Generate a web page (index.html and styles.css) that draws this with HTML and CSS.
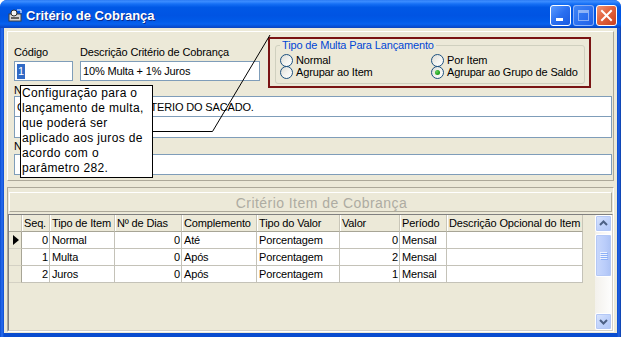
FILE: index.html
```html
<!DOCTYPE html>
<html lang="pt-BR">
<head>
<meta charset="utf-8">
<title>Critério de Cobrança</title>
<link rel="stylesheet" href="styles.css">
</head>
<body>
<div class="window">
  <header class="titlebar">
    <svg class="app-icon" viewBox="0 0 14 13" width="14" height="13">
      <rect x="1" y="5" width="12" height="7" fill="#d8d8d8" stroke="#404040" stroke-width="1"/>
      <circle cx="6" cy="4" r="3" fill="#f4f4f4" stroke="#303030" stroke-width="1"/>
      <rect x="3" y="8" width="8" height="2" fill="#606060"/>
      <path d="M9 1 L13 1 L13 4" stroke="#fff" stroke-width="1" fill="none"/>
    </svg>
    <span class="title">Critério de Cobrança</span>
    <div class="controls">
      <span class="wbtn wbtn-min"><span class="glyph-min"></span></span>
      <span class="wbtn wbtn-max"><span class="glyph-max"></span></span>
      <span class="wbtn wbtn-close"><svg viewBox="0 0 19 19" width="19" height="19"><path d="M5 5 L14 14 M14 5 L5 14" stroke="#fff" stroke-width="2" stroke-linecap="square"/></svg></span>
    </div>
  </header>
  <main class="client">
    <section class="top-panel">
      <div class="row-head">
        <div class="field field-code">
          <span class="lbl">Código</span>
          <div class="tbox"><span class="sel">1</span></div>
        </div>
        <div class="field field-desc">
          <span class="lbl">Descrição Critério de Cobrança</span>
          <div class="tbox">10% Multa + 1% Juros</div>
        </div>
        <div class="red-frame">
          <fieldset class="group">
            <legend>Tipo de Multa Para Lançamento</legend>
            <div class="radios">
              <span class="radio"><span class="rb"></span>Normal</span>
              <span class="radio"><span class="rb"></span>Por Item</span>
              <span class="radio"><span class="rb"></span>Agrupar ao Item</span>
              <span class="radio"><span class="rb rb-on"></span>Agrupar ao Grupo de Saldo</span>
            </div>
          </fieldset>
        </div>
      </div>
      <span class="lbl lbl-wide">Nota de Cobrança</span>
      <div class="memo">
        <div class="tbox tbox-wide">COBRAR CONFORME CRITERIO DO SACADO.</div>
        <div class="tbox tbox-wide tbox-cont"></div>
      </div>
      <span class="lbl lbl-wide2">Nota Adicional</span>
      <div class="tbox tbox-wide"></div>
    </section>

    <section class="grid-panel">
      <div class="caption">Critério Item de Cobrança</div>
      <div class="dbgrid">
        <div class="cells">
          <div class="c h"></div>
          <div class="c h">Seq.</div>
          <div class="c h">Tipo de Item</div>
          <div class="c h">Nº de Dias</div>
          <div class="c h">Complemento</div>
          <div class="c h">Tipo do Valor</div>
          <div class="c h">Valor</div>
          <div class="c h">Período</div>
          <div class="c h">Descrição Opcional do Item</div>

          <div class="c ind"><span class="arrow"></span></div>
          <div class="c num">0</div>
          <div class="c">Normal</div>
          <div class="c num">0</div>
          <div class="c">Até</div>
          <div class="c">Porcentagem</div>
          <div class="c num">0</div>
          <div class="c">Mensal</div>
          <div class="c"></div>

          <div class="c ind"></div>
          <div class="c num">1</div>
          <div class="c">Multa</div>
          <div class="c num">0</div>
          <div class="c">Após</div>
          <div class="c">Porcentagem</div>
          <div class="c num">2</div>
          <div class="c">Mensal</div>
          <div class="c"></div>

          <div class="c ind"></div>
          <div class="c num">2</div>
          <div class="c">Juros</div>
          <div class="c num">0</div>
          <div class="c">Após</div>
          <div class="c">Porcentagem</div>
          <div class="c num">1</div>
          <div class="c">Mensal</div>
          <div class="c"></div>
        </div>
        <div class="vscroll">
          <div class="sb-btn"><svg viewBox="0 0 15 15" width="15" height="15"><path d="M4 9 L7.5 5.5 L11 9" stroke="#4D6185" stroke-width="2" fill="none"/></svg></div>
          <div class="sb-track">
            <div class="sb-thumb"><span></span><span></span><span></span><span></span></div>
          </div>
          <div class="sb-btn"><svg viewBox="0 0 15 15" width="15" height="15"><path d="M4 6 L7.5 9.5 L11 6" stroke="#4D6185" stroke-width="2" fill="none"/></svg></div>
        </div>
      </div>
    </section>

    <svg class="callout" width="613" height="305" viewBox="0 0 613 305">
      <path d="M149 103.5 H208.5 L266 7" stroke="#000" stroke-width="1" fill="none"/>
    </svg>
    <div class="tooltip">Configuração para o<br>lançamento de multa,<br>que poderá ser<br>aplicado aos juros de<br>acordo com o<br>parâmetro 282.</div>
  </main>
</div>
</body>
</html>
```

FILE: styles.css
```css
* { box-sizing: border-box; }

html, body {
  margin: 0;
  padding: 0;
  background: #ffffff;
}

body {
  font-family: "Liberation Sans", Arial, sans-serif;
  font-size: 11px;
  letter-spacing: -0.15px;
  color: #000;
}

.window {
  width: 621px;
  height: 337px;
  display: flex;
  flex-direction: column;
  background: linear-gradient(90deg, #0a4ccf 0, #2a6ef0 2px, #0a4ccf 4px, #0a4ccf 617px, #2463e3 619px, #0a3ea8 621px);
  border-radius: 7px 7px 0 0;
  overflow: hidden;
}

/* ---------- title bar ---------- */
.titlebar {
  height: 28px;
  flex: none;
  display: flex;
  align-items: center;
  padding: 2px 4px 0 8px;
  background: linear-gradient(180deg, #2d7cf4 0%, #3a8cff 6%, #1670f5 14%, #0058e6 26%, #0054e3 55%, #005ae8 75%, #0761ee 86%, #0650d6 94%, #0b45c0 100%);
}

.app-icon {
  width: 14px;
  height: 13px;
  margin-right: 4px;
  flex: none;
}

.title {
  color: #fff;
  font-weight: bold;
  font-size: 13px;
  letter-spacing: 0;
  text-shadow: 1px 1px 0 #0a2a8c;
}

.controls {
  margin-left: auto;
  display: flex;
  gap: 2px;
}

.wbtn {
  width: 21px;
  height: 21px;
  border: 1px solid #fff;
  border-radius: 3px;
  position: relative;
  display: block;
}

.wbtn-min {
  background: linear-gradient(135deg, #5b9bff 0%, #2a6ff0 50%, #1a5ae0 100%);
}

.glyph-min {
  position: absolute;
  left: 5px;
  bottom: 4px;
  width: 7px;
  height: 3px;
  background: #fff;
}

.wbtn-max {
  background: linear-gradient(135deg, #3f84f5 0%, #2a6ff0 60%, #2060e6 100%);
  border-color: rgba(255, 255, 255, 0.45);
}

.glyph-max {
  position: absolute;
  left: 4px;
  top: 4px;
  width: 11px;
  height: 11px;
  border: 1px solid rgba(255, 255, 255, 0.45);
  border-top-width: 3px;
}

.wbtn-close {
  background: linear-gradient(135deg, #f19373 0%, #e2643f 45%, #c8401f 100%);
}

.wbtn-close svg {
  display: block;
  margin: 0;
}

/* ---------- client ---------- */
.client {
  flex: 1;
  margin: 0 4px 4px;
  background: #ece9d8;
  padding: 3px 3px 1px;
  display: flex;
  flex-direction: column;
  gap: 6px;
  position: relative;
}

.top-panel {
  height: 150px;
  flex: none;
  border: 1px solid;
  border-color: #fff #aca899 #aca899 #fff;
  padding: 0 0 0 6px;
}

.row-head {
  display: flex;
  align-items: flex-start;
  height: 49px;
}

.field {
  margin-top: 14px;
  display: flex;
  flex-direction: column;
}

.field-code { width: 59px; }
.field-desc { width: 180px; margin-left: 7px; }

.lbl {
  display: block;
  line-height: 13px;
  height: 13px;
  white-space: nowrap;
}

.tbox {
  height: 20px;
  border: 1px solid #7f9db9;
  background: #fff;
  display: flex;
  align-items: center;
  padding-left: 2px;
  white-space: nowrap;
  overflow: hidden;
}

.field .tbox { margin-top: 2px; }

.sel {
  background: #316ac5;
  color: #fff;
  line-height: 15px;
  padding: 0 1px;
}

.red-frame {
  margin-left: 8px;
  margin-top: 5px;
  width: 323px;
  height: 51px;
  flex: none;
  border: 2px solid #7a1414;
  padding: 0 4px 0 5px;
}

.group {
  margin: 0;
  padding: 0 4px 4px 4px;
  border: 1px solid #d0d0bf;
  border-radius: 3px;
  height: 45px;
  min-inline-size: 0;
}

.group legend {
  padding: 0 2px;
  margin: 0;
  color: #0046d5;
  line-height: 13px;
}

.radios {
  display: grid;
  grid-template-columns: 151px auto;
  grid-auto-rows: 12px;
  margin-top: 2px;
}

.radio {
  display: flex;
  align-items: center;
  white-space: nowrap;
}

.rb {
  width: 13px;
  height: 13px;
  border: 1px solid #1c5180;
  border-radius: 50%;
  background: linear-gradient(135deg, #dcdcd5 0%, #f4f4f0 55%, #ffffff 100%);
  margin-right: 3px;
  flex: none;
  position: relative;
}

.rb-on::after {
  content: "";
  position: absolute;
  left: 3px;
  top: 3px;
  width: 5px;
  height: 5px;
  border-radius: 50%;
  background: radial-gradient(circle at 35% 35%, #64d45c 0%, #21a121 60%, #1a8a1a 100%);
}

.lbl-wide {
  margin-top: 4px;
  line-height: 11px;
  height: 11px;
}

.memo {
  width: 598px;
}

.tbox-wide {
  width: 598px;
  height: 21px;
}

.tbox-cont {
  border-top: none;
  height: 21px;
}

.lbl-wide2 {
  margin-top: 3px;
  margin-bottom: 2px;
  line-height: 11px;
  height: 11px;
}

/* ---------- grid panel ---------- */
.grid-panel {
  flex: 1;
  border: 1px solid;
  border-color: #aca899 #fff #fff #aca899;
  display: flex;
  flex-direction: column;
  padding: 4px 0 0 0;
}

.caption {
  height: 20px;
  margin: 0 1px;
  border: 1px solid;
  border-color: #fff #aca899 #aca899 #fff;
  color: #aeaca2;
  font-size: 14px;
  letter-spacing: 0.45px;
  display: flex;
  align-items: center;
  justify-content: center;
  padding-left: 22px;
  padding-top: 1px;
}

.dbgrid {
  flex: 1;
  margin-top: 2px;
  border: 1px solid;
  border-color: #808080 #d4d0c8 #d4d0c8 #808080;
  display: flex;
  background: #ece9d8;
}

.cells {
  flex: 1;
  display: grid;
  grid-template-columns: 13px 28px 65px 67px 75px 83px 60px 47px 136px;
  grid-auto-rows: 17px;
  align-content: start;
}

.c {
  background: #fff;
  border-right: 1px solid #c4c2b8;
  border-bottom: 1px solid #c4c2b8;
  padding: 0 1px 0 2px;
  white-space: nowrap;
  overflow: hidden;
  display: flex;
  align-items: center;
}

.c.h {
  background: #ece9d8;
  border-right: 1px solid #c9c6b8;
  border-bottom: 1px solid #a7a596;
  box-shadow: inset 1px 0 0 #fff;
}

.c.ind {
  background: #ece9d8;
  border-right: 1px solid #a7a596;
  border-bottom: 1px solid #d4d1c4;
  padding: 0;
  justify-content: center;
}

.c.num {
  justify-content: flex-end;
}

.arrow {
  width: 0;
  height: 0;
  border-top: 5px solid transparent;
  border-bottom: 5px solid transparent;
  border-left: 6px solid #000;
  margin-left: 1px;
}

.vscroll {
  width: 17px;
  flex: none;
  display: flex;
  flex-direction: column;
  background: linear-gradient(90deg, #f3f1ec 0%, #fefefe 100%);
}

.sb-btn {
  height: 17px;
  flex: none;
  border: 1px solid #fff;
  border-radius: 2px;
  background: linear-gradient(135deg, #dbe6fd 0%, #c1d3fb 50%, #b0c6f6 100%);
  box-shadow: inset 0 0 0 1px #b4c8f6;
}

.sb-btn svg { display: block; }

.sb-track {
  flex: 1;
  padding-top: 2px;
}

.sb-thumb {
  height: 43px;
  border: 1px solid #fff;
  border-radius: 2px;
  background: linear-gradient(90deg, #c9d8fc 0%, #bacdfa 60%, #acc2f4 100%);
  box-shadow: inset 0 0 0 1px #b4c8f6;
  display: flex;
  flex-direction: column;
  align-items: center;
  justify-content: center;
  gap: 1px;
}

.sb-thumb span {
  width: 7px;
  height: 1px;
  background: #eef3fe;
  box-shadow: 1px 1px 0 #8cb0f8;
}

/* ---------- overlays ---------- */
.callout {
  position: absolute;
  left: 0;
  top: 0;
  pointer-events: none;
}

.tooltip {
  position: absolute;
  left: 16px;
  top: 57px;
  width: 133px;
  height: 93px;
  background: #fff;
  border: 1px solid #000;
  padding: 0 0 0 1px;
  font-size: 12px;
  letter-spacing: 0.35px;
  line-height: 15px;
  white-space: nowrap;
  overflow: hidden;
}
```
